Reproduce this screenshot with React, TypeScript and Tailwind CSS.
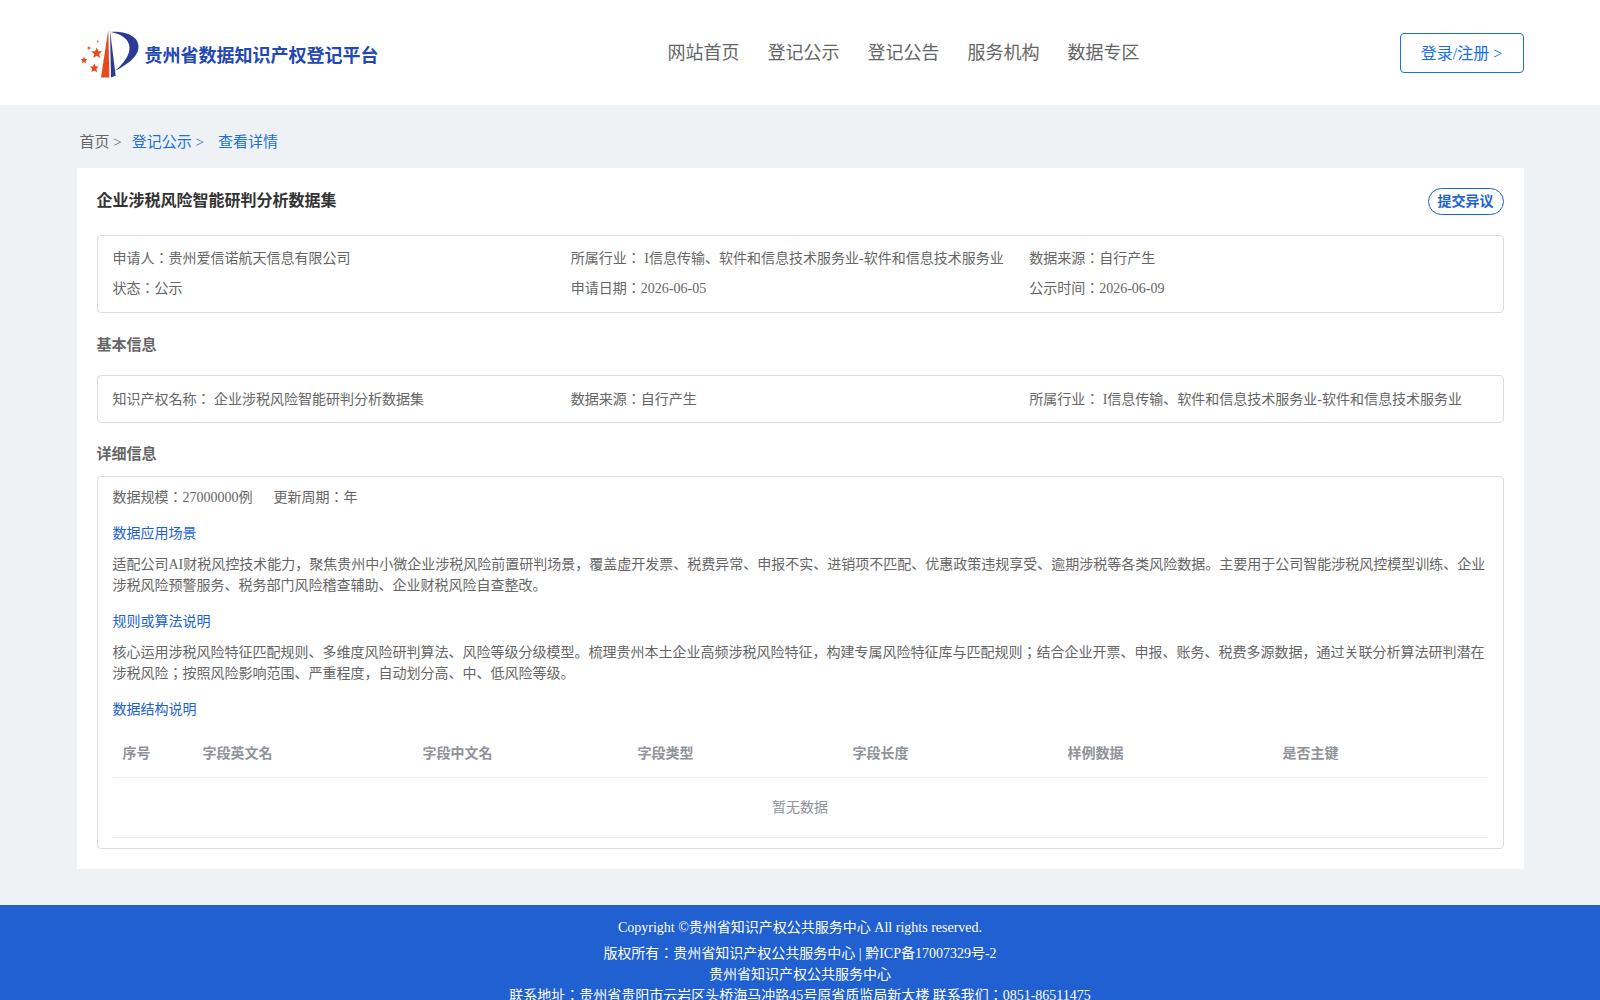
const navItems = ["网站首页", "登记公示", "登记公告", "服务机构", "数据专区"]
const tableHead = ["序号", "字段英文名", "字段中文名", "字段类型", "字段长度", "样例数据", "是否主键"]

function Logo() {
  return (
    <svg viewBox="0 0 60 52" className="h-[52px] w-[60px] shrink-0">
      <path d="M28.300 2.800 L29.300 50.500 L21 50.500 Z" fill="#e8481c" />
      <path d="M30 3.800 L35.700 48.800 L31 50.500 Z" fill="#2b3a97" />
      <path d="M31 5 C45 4 58 9 58.500 19 C59 30 46 38 35 44 C44 36 50 28 49.500 20 C49 12 41 7 31 5 Z" fill="#2b3a97" />
      <polygon points="16.700,20.500 18.300,24.300 22.200,24.300 19.100,27 20.200,31 16.700,28.700 13.200,31 14.300,27 11.200,24.300 15.100,24.300" fill="#e8481c" />
      <polygon points="4,29.500 5,32 7.500,32 5.600,33.800 6.200,36.500 4,35 1.800,36.500 2.400,33.800 0.500,32 3,32" fill="#e8481c" />
      <polygon points="14.300,36.500 15.600,39.600 19,39.600 16.300,41.800 17.200,45.300 14.300,43.400 11.400,45.300 12.300,41.800 9.600,39.600 13,39.600" fill="#e8481c" />
      <circle cx="9" cy="21" r="1.500" fill="#e8683c" />
      <circle cx="17.700" cy="14.500" r="1" fill="#e8683c" />
    </svg>
  )
}

function Label({ children }: { children: React.ReactNode }) {
  return <div className="mt-[15px] text-sm leading-[21px] text-[#2062d0]">{children}</div>
}

export default function App() {
  return (
    <div className="min-h-screen bg-[#eff2f5] font-['Liberation_Serif','Noto_Sans_CJK_JP',serif] text-sm text-[#666]">
      <header className="h-[105px] bg-white">
        <div className="mx-auto flex h-full w-[1447px] items-center">
          <div className="flex w-[591px] items-center pl-[3px]">
            <Logo />
            <span className="ml-[5px] mt-[7px] font-['Liberation_Sans','Noto_Sans_CJK_SC',sans-serif] text-lg font-bold text-[#2347b4]">
              贵州省数据知识产权登记平台
            </span>
          </div>
          <nav className="flex flex-1 gap-7 text-lg text-[#666]">
            {navItems.map((item) => (
              <a key={item}>{item}</a>
            ))}
          </nav>
          <button className="h-10 w-[124px] rounded border border-[#1a6ee6] pt-[2px] text-base text-[#1a6ee6]">
            登录/注册 &gt;
          </button>
        </div>
      </header>

      <main className="mx-auto w-[1447px]">
        <div className="flex h-[63px] items-center gap-[10px] pl-[3px] pt-[12px] text-[15px]">
          <span>首页 &gt;</span>
          <span className="text-[#1a6ee6]">登记公示 &gt;</span>
          <span className="ml-1 text-[#1a6ee6]">查看详情</span>
        </div>

        <section className="h-[701px] bg-white px-5 pt-5">
          <div className="flex h-[47px] items-start justify-between">
            <h1 className="text-base leading-[25px] font-bold text-[#333]">企业涉税风险智能研判分析数据集</h1>
            <button className="h-[27px] w-[76px] rounded-full border border-[#2062d0] text-sm font-bold text-[#2062d0]">
              提交异议
            </button>
          </div>

          <div className="grid h-[78px] grid-cols-3 content-center gap-y-2 rounded border border-[#ddd] px-[15px]">
            <div className="leading-[22px]">申请人：贵州爱信诺航天信息有限公司</div>
            <div className="leading-[22px]">所属行业： I信息传输、软件和信息技术服务业-软件和信息技术服务业</div>
            <div className="leading-[22px]">数据来源：自行产生</div>
            <div className="leading-[22px]">状态：公示</div>
            <div className="leading-[22px]">申请日期：2026-06-05</div>
            <div className="leading-[22px]">公示时间：2026-06-09</div>
          </div>

          <h2 className="flex h-[62px] items-center pt-[3px] text-[15px] font-bold text-[#666]">基本信息</h2>

          <div className="grid h-[48px] grid-cols-3 items-center rounded border border-[#ddd] px-[15px] pt-[1px]">
            <div>知识产权名称： 企业涉税风险智能研判分析数据集</div>
            <div>数据来源：自行产生</div>
            <div>所属行业： I信息传输、软件和信息技术服务业-软件和信息技术服务业</div>
          </div>

          <h2 className="flex h-[53px] items-center pt-[10px] text-[15px] font-bold text-[#666]">详细信息</h2>

          <div className="h-[373px] rounded border border-[#ddd] px-[15px] pt-[10px]">
            <div className="flex gap-[21px] leading-[21px]">
              <span>数据规模：27000000例</span>
              <span>更新周期：年</span>
            </div>
            <Label>数据应用场景</Label>
            <p className="mt-[10px] leading-[21px]">
              适配公司AI财税风控技术能力，聚焦贵州中小微企业涉税风险前置研判场景，覆盖虚开发票、税费异常、申报不实、进销项不匹配、优惠政策违规享受、逾期涉税等各类风险数据。主要用于公司智能涉税风控模型训练、企业涉税风险预警服务、税务部门风险稽查辅助、企业财税风险自查整改。
            </p>
            <Label>规则或算法说明</Label>
            <p className="mt-[10px] leading-[21px]">
              核心运用涉税风险特征匹配规则、多维度风险研判算法、风险等级分级模型。梳理贵州本土企业高频涉税风险特征，构建专属风险特征库与匹配规则；结合企业开票、申报、账务、税费多源数据，通过关联分析算法研判潜在涉税风险；按照风险影响范围、严重程度，自动划分高、中、低风险等级。
            </p>
            <Label>数据结构说明</Label>
            <table className="mt-[10px] w-full table-fixed">
              <colgroup>
                <col className="w-[80px]" />
                <col className="w-[220px]" />
              </colgroup>
              <thead>
                <tr className="h-[47px] border-b border-[#ebeef5]">
                  {tableHead.map((h) => (
                    <th key={h} className="px-[10px] pt-[2px] text-left font-bold text-[#909399]">
                      {h}
                    </th>
                  ))}
                </tr>
              </thead>
              <tbody>
                <tr className="h-[60px] border-b border-[#ebeef5]">
                  <td colSpan={7} className="pt-[2px] text-center text-[#909399]">
                    暂无数据
                  </td>
                </tr>
              </tbody>
            </table>
          </div>
        </section>
      </main>

      <footer className="mt-9 bg-[#2060d0] pt-[12px] pb-4 text-center text-sm leading-[21px] text-white">
        <div className="mb-[5px]">Copyright ©贵州省知识产权公共服务中心 All rights reserved.</div>
        <div>版权所有：贵州省知识产权公共服务中心 | 黔ICP备17007329号-2</div>
        <div>贵州省知识产权公共服务中心</div>
        <div>联系地址：贵州省贵阳市云岩区头桥海马冲路45号原省质监局新大楼 联系我们：0851-86511475</div>
      </footer>
    </div>
  )
}
